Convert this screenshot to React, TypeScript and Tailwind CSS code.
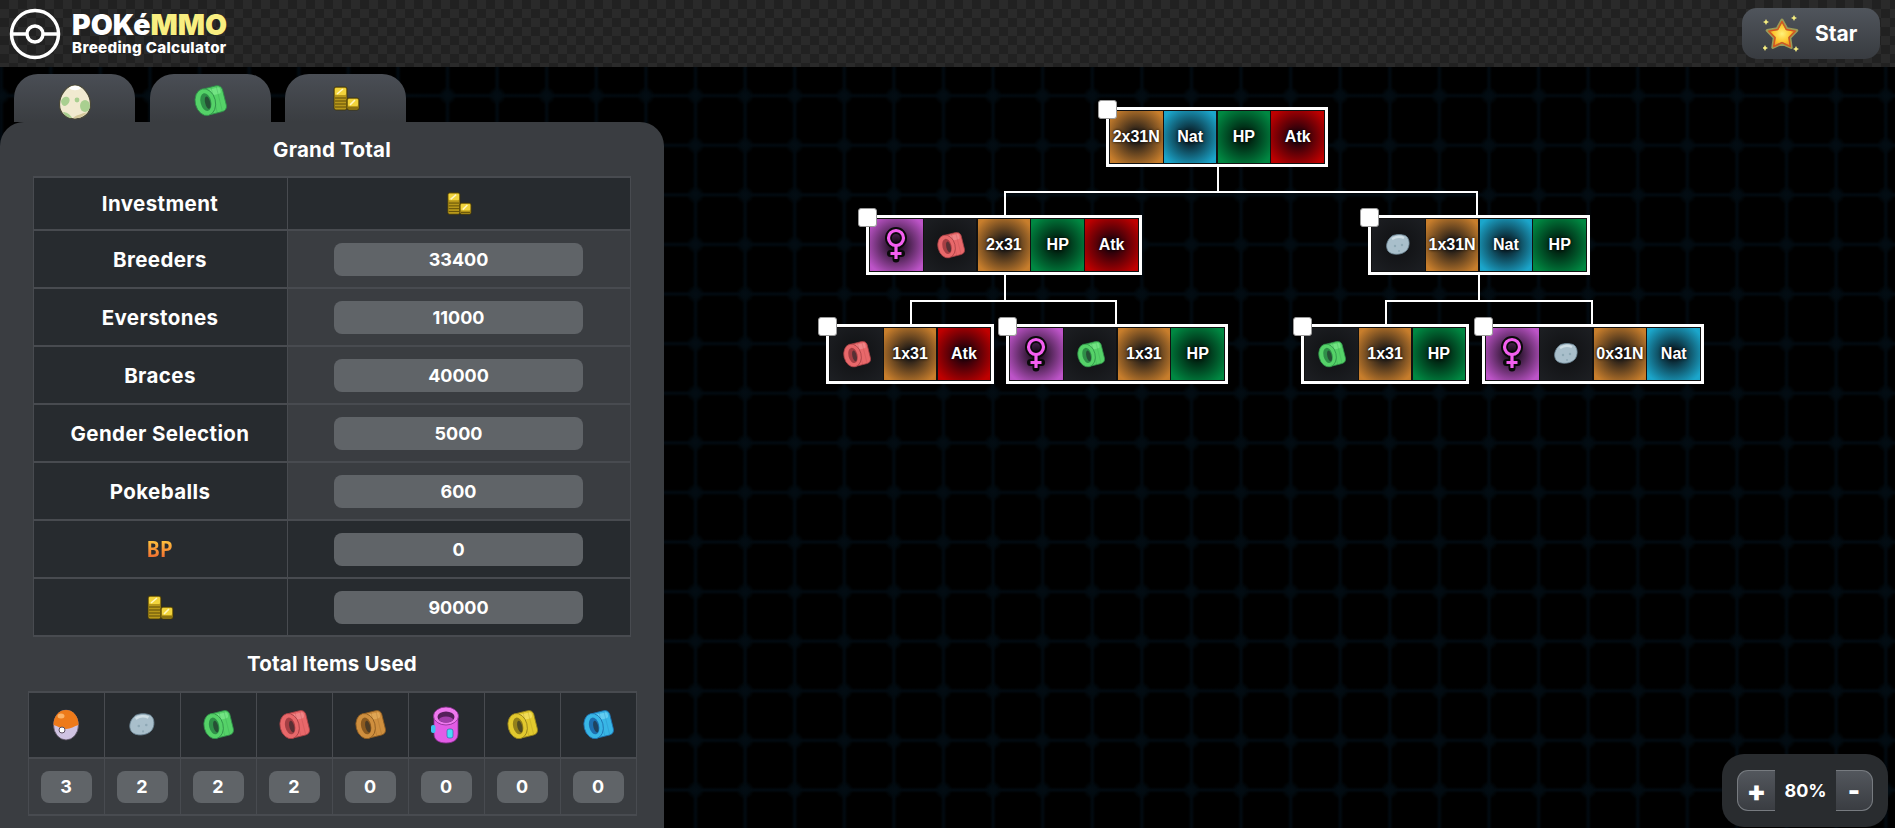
import type { ReactNode } from 'react'

type CellKind = 'iv' | 'nat' | 'hp' | 'atk' | 'female' | 'redBrace' | 'greenBrace' | 'stone'
type Cell = { kind: CellKind; label?: string }
type TreeNode = { x: number; y: number; cells: Cell[] }

// canvas coords, canvas starts at 664,67
const NODES: TreeNode[] = [
  { x: 442, y: 40, cells: [{ kind: 'iv', label: '2x31N' }, { kind: 'nat', label: 'Nat' }, { kind: 'hp', label: 'HP' }, { kind: 'atk', label: 'Atk' }] },
  { x: 202, y: 148, cells: [{ kind: 'female' }, { kind: 'redBrace' }, { kind: 'iv', label: '2x31' }, { kind: 'hp', label: 'HP' }, { kind: 'atk', label: 'Atk' }] },
  { x: 704, y: 148, cells: [{ kind: 'stone' }, { kind: 'iv', label: '1x31N' }, { kind: 'nat', label: 'Nat' }, { kind: 'hp', label: 'HP' }] },
  { x: 162, y: 257, cells: [{ kind: 'redBrace' }, { kind: 'iv', label: '1x31' }, { kind: 'atk', label: 'Atk' }] },
  { x: 342, y: 257, cells: [{ kind: 'female' }, { kind: 'greenBrace' }, { kind: 'iv', label: '1x31' }, { kind: 'hp', label: 'HP' }] },
  { x: 637, y: 257, cells: [{ kind: 'greenBrace' }, { kind: 'iv', label: '1x31' }, { kind: 'hp', label: 'HP' }] },
  { x: 818, y: 257, cells: [{ kind: 'female' }, { kind: 'stone' }, { kind: 'iv', label: '0x31N' }, { kind: 'nat', label: 'Nat' }] },
]

const LINES = [
  { x: 553, y: 100, w: 2, h: 25 },
  { x: 340, y: 124, w: 474, h: 2 },
  { x: 340, y: 124, w: 2, h: 25 },
  { x: 812, y: 124, w: 2, h: 25 },
  { x: 340, y: 207, w: 2, h: 26 },
  { x: 246, y: 233, w: 207, h: 2 },
  { x: 246, y: 233, w: 2, h: 24 },
  { x: 451, y: 233, w: 2, h: 24 },
  { x: 814, y: 207, w: 2, h: 26 },
  { x: 721, y: 233, w: 207, h: 2 },
  { x: 721, y: 233, w: 2, h: 24 },
  { x: 927, y: 233, w: 2, h: 24 },
]

const CELL_BG: Record<CellKind, string> = {
  iv: 'bg-[radial-gradient(circle,#121316_8%,#c87e2c_88%)]',
  nat: 'bg-[radial-gradient(circle,#08141c_8%,#1ba6cb_88%)]',
  hp: 'bg-[radial-gradient(circle,#00140a_8%,#008842_88%)]',
  atk: 'bg-[radial-gradient(circle,#14000c_8%,#bf0000_88%)]',
  female: 'bg-[radial-gradient(circle,#180c1a_8%,#bd54c8_88%)]',
  redBrace: 'bg-[radial-gradient(circle,#0f1012_0%,#1d1f23_100%)]',
  greenBrace: 'bg-[radial-gradient(circle,#0f1012_0%,#1d1f23_100%)]',
  stone: 'bg-[radial-gradient(circle,#0f1012_0%,#1d1f23_100%)]',
}

function Brace({ fill, light, dark, size = 32 }: { fill: string; light: string; dark: string; size?: number }) {
  return (
    <svg width={size} height={size} viewBox="0 0 32 32">
      <g transform="rotate(-14 16 16)">
        <rect x="9" y="3.500" width="21" height="25" rx="5" fill={fill} stroke={dark} strokeWidth="0.8" />
        <rect x="15" y="5.500" width="13" height="6" rx="2" fill={light} />
        <path d="M20 4v24M25 4v24" stroke={dark} strokeWidth="0.5" opacity="0.45" />
        <ellipse cx="11.500" cy="16" rx="9.500" ry="12.800" fill={fill} stroke={dark} strokeWidth="0.8" />
        <ellipse cx="12" cy="16" rx="5" ry="8.500" fill={dark} />
        <ellipse cx="13.500" cy="17" rx="2.400" ry="6" fill="#22262a" opacity="0.6" />
      </g>
    </svg>
  )
}

const GreenBrace = (p: { size?: number }) => <Brace fill="#55d268" light="#72e483" dark="#2f8f48" {...p} />
const RedBrace = (p: { size?: number }) => <Brace fill="#e8686a" light="#f08486" dark="#a53f44" {...p} />
const OrangeBrace = () => <Brace fill="#cf8f3e" light="#e0a655" dark="#8a5a20" />
const YellowBrace = () => <Brace fill="#e2c92e" light="#f0dc58" dark="#93801a" />
const BlueBrace = () => <Brace fill="#38b6e6" light="#62cdf2" dark="#1d6eae" />

function Stone({ size = 28 }: { size?: number }) {
  return (
    <svg width={size} height={size} viewBox="0 0 28 28">
      <path d="M4 20C1 15 3 9 8 5c4-2 10-2 14 0 4 3 4 10 1 14-4 5-15 6-19 1z" fill="#a9bfcb" stroke="#6d8796" strokeWidth="0.8" />
      <path d="M8 8c3-2 8-3 12-1" stroke="#cfdee5" strokeWidth="2.500" fill="none" />
      <circle cx="11" cy="15" r="1.200" fill="#8ea8b5" />
      <circle cx="18" cy="14" r="1.200" fill="#8ea8b5" />
      <circle cx="15" cy="20" r="1" fill="#8ea8b5" />
    </svg>
  )
}

function Female() {
  return (
    <svg width="26" height="36" viewBox="0 0 26 36">
      <g fill="none" stroke="#0a0a0a" strokeWidth="7" strokeLinecap="round">
        <circle cx="13" cy="11" r="7.500" />
        <path d="M13 19v13M7.500 26.500h11" />
      </g>
      <g fill="none" stroke="#f45ff0" strokeWidth="3.200">
        <circle cx="13" cy="11" r="7.500" />
        <path d="M13 19v13M7.500 26.500h11" />
      </g>
    </svg>
  )
}

function Egg() {
  return (
    <svg width="34" height="36" viewBox="0 0 34 36">
      <path d="M17 1C9 1 1.500 11 1.500 20.500 1.500 30 9 35 17 35s15.500-5 15.500-14.500C32.500 11 25 1 17 1z" fill="#f1ead0" stroke="#4a4838" strokeWidth="1.200" />
      <path d="M11 4c3-3 9-3 12 0-3 3-9 3-12 0z" fill="#ffffff" />
      <path d="M3 17c2-5 6-5 8-3 2 3-1 7-4 8-2 0-4-2-4-5z" fill="#a9cf90" />
      <ellipse cx="27" cy="22" rx="5" ry="6" fill="#a9cf90" />
      <circle cx="19" cy="16" r="2.400" fill="#a9cf90" />
      <path d="M5 28c3 0 7 2 9 6-4 0-7-2-9-6z" fill="#a9cf90" />
      <path d="M15 34c3-3 9-4 14-6-3 4-8 7-14 6z" fill="#d4c89a" />
    </svg>
  )
}

function Coins({ size = 30 }: { size?: number }) {
  return (
    <svg width={size} height={size} viewBox="0 0 30 30">
      <g stroke="#3c3208" strokeWidth="0.8">
        <rect x="3" y="3" width="13" height="23" rx="2" fill="#b8981a" />
        <rect x="16" y="14" width="12" height="12" rx="2" fill="#b8981a" />
      </g>
      <rect x="4" y="4" width="11" height="7" rx="1" fill="#f2d43c" />
      <rect x="17" y="15" width="10" height="7" rx="1" fill="#f2d43c" />
      <path d="M6 10l6-5M19 21l5-5" stroke="#fff6c0" strokeWidth="1.600" />
      <path d="M4 14h11M4 17h11M4 20h11M4 23h11M17 24h10" stroke="#5e4c08" strokeWidth="1" />
    </svg>
  )
}

function Pokeball() {
  return (
    <svg width="28" height="34" viewBox="0 0 28 34">
      <ellipse cx="14" cy="17" rx="12.500" ry="15" fill="#cfc3e2" stroke="#5b5060" strokeWidth="0.8" />
      <path d="M1.500 17C1.500 8 7 2 14 2s12.500 6 12.500 15c-4 1-8 4-12.500 4S5.500 18 1.500 17z" fill="#ee7a1a" />
      <ellipse cx="9" cy="8" rx="3.500" ry="2.500" fill="#fbb36a" />
      <circle cx="10" cy="22" r="3" fill="#ffffff" stroke="#5b5060" strokeWidth="1" />
    </svg>
  )
}

function Ring() {
  return (
    <svg width="32" height="40" viewBox="0 0 32 40">
      <path d="M4 12h24v17c0 6-5 9-12 9S4 35 4 29z" fill="#e25ce6" stroke="#8a2c92" strokeWidth="0.8" />
      <ellipse cx="16" cy="11" rx="12.500" ry="9" fill="#ee78ee" stroke="#8a2c92" strokeWidth="0.8" />
      <ellipse cx="16" cy="12" rx="8.500" ry="5.500" fill="#55205a" />
      <ellipse cx="16" cy="14.500" rx="7" ry="3" fill="#a23eaa" />
      <rect x="1" y="20" width="4.500" height="8" rx="2" fill="#3cc4ee" />
      <rect x="17" y="24" width="6" height="9" rx="2" fill="#4cd8f8" stroke="#1a6a9a" strokeWidth="0.6" />
    </svg>
  )
}

function StarIcon() {
  return (
    <svg width="38" height="38" viewBox="0 0 38 38">
      <defs>
        <radialGradient id="star-fill">
          <stop offset="0%" stopColor="#fff27a" />
          <stop offset="60%" stopColor="#fdc52c" />
          <stop offset="100%" stopColor="#ee8a1e" />
        </radialGradient>
      </defs>
      <path d="M19 5l4.800 8.700 10 1.800-7 7.200 1.400 9.800-9.200-4.200-9.200 4.200 1.400-9.800-7-7.200 10-1.800z" fill="url(#star-fill)" stroke="#9a9a58" strokeWidth="3" strokeLinejoin="round" />
      <path d="M19 6.500l4.300 8 9 1.600-6.300 6.500 1.300 9-8.300-3.900-8.300 3.900 1.300-9-6.300-6.500 9-1.600z" fill="none" stroke="#d8541c" strokeWidth="1.400" strokeLinejoin="round" />
      <g fill="#f6ee80">
        <path d="M3 4l1 2 2 1-2 1-1 2-1-2-2-1 2-1zM31 0l1 2 2 1-2 1-1 2-1-2-2-1 2-1zM2 30l1 2 2 1-2 1-1 2-1-2-2-1 2-1zM33 31l1 2 2 1-2 1-1 2-1-2-2-1 2-1z" />
      </g>
    </svg>
  )
}

function Logo() {
  return (
    <svg width="52" height="52" viewBox="0 0 52 52">
      <g fill="none" stroke="#ffffff" strokeWidth="3.500">
        <circle cx="26" cy="26" r="23.500" />
        <circle cx="26" cy="26" r="8" />
        <path d="M2.500 26H18M34 26h15.500" />
      </g>
    </svg>
  )
}

function NodeCell({ cell }: { cell: Cell }) {
  return (
    <div className={`w-[52.5px] h-[52px] flex items-center justify-center ${CELL_BG[cell.kind]}`}>
      {cell.label && (
        <span className="font-[family-name:'Liberation_Sans',Arial,sans-serif] font-bold text-[16px] text-white [text-shadow:0_0_3px_#000]">
          {cell.label}
        </span>
      )}
      {cell.kind === 'female' && <Female />}
      {cell.kind === 'redBrace' && <RedBrace size={29} />}
      {cell.kind === 'greenBrace' && <GreenBrace size={29} />}
      {cell.kind === 'stone' && <Stone />}
    </div>
  )
}

function BreedNode({ node }: { node: TreeNode }) {
  return (
    <div className="absolute" style={{ left: node.x, top: node.y }}>
      <div className="flex gap-[1.33px] border-[3px] border-white bg-[#111] p-px">
        {node.cells.map((c, i) => (
          <NodeCell key={i} cell={c} />
        ))}
      </div>
      <div className="absolute -left-2 -top-[7px] w-[19px] h-[19px] rounded-[3px] bg-white border border-[#9a9a9a]" />
    </div>
  )
}

function Pill({ children }: { children: ReactNode }) {
  return (
    <div className="mx-auto w-[249px] h-[33px] rounded-lg bg-[#606468] flex items-center justify-center text-[18px] tracking-normal font-bold text-white">
      {children}
    </div>
  )
}

const COSTS: { label: ReactNode; value: string; dark?: boolean }[] = [
  { label: 'Breeders', value: '33400' },
  { label: 'Everstones', value: '11000' },
  { label: 'Braces', value: '40000' },
  { label: 'Gender Selection', value: '5000' },
  { label: 'Pokeballs', value: '600' },
  {
    label: (
      <span className="font-[family-name:'DejaVu_Sans_Mono',monospace] font-bold text-[21px] leading-[24px] bg-gradient-to-b from-[#ffd040] to-[#e8502c] bg-clip-text text-transparent">
        BP
      </span>
    ),
    value: '0',
    dark: true,
  },
  { label: <Coins size={30} />, value: '90000', dark: true },
]

const ITEMS: { icon: ReactNode; count: number }[] = [
  { icon: <Pokeball />, count: 3 },
  { icon: <Stone size={30} />, count: 2 },
  { icon: <GreenBrace />, count: 2 },
  { icon: <RedBrace />, count: 2 },
  { icon: <OrangeBrace />, count: 0 },
  { icon: <Ring />, count: 0 },
  { icon: <YellowBrace />, count: 0 },
  { icon: <BlueBrace />, count: 0 },
]

function Tab({ children }: { children: ReactNode }) {
  return (
    <div className="w-[121px] h-[48px] rounded-t-[24px] bg-gradient-to-b from-[#4a4e55] to-[#3a3d41] flex items-start justify-center pt-[10px]">
      {children}
    </div>
  )
}

export default function App() {
  return (
    <div className="w-[1895px] h-[828px] overflow-hidden flex flex-col bg-black text-white font-[family-name:Inter,sans-serif]">
      <header className="h-[67px] shrink-0 flex items-center justify-between pl-[9px] pr-[15px] bg-[#252525] bg-[conic-gradient(#2a2a2a_25%,#212121_0_50%,#2a2a2a_0_75%,#212121_0)] bg-[size:18px_18px]">
        <div className="flex items-center gap-[11px]">
          <Logo />
          <div className="flex flex-col">
            <div className="text-[28.5px] leading-[28px] font-black">
              POKé<span className="text-[#f8ee80]">MMO</span>
            </div>
            <div className="text-[15.2px] leading-[18px] font-extrabold tracking-[0.3px]">Breeding Calculator</div>
          </div>
        </div>
        <div className="w-[138px] h-[51px] rounded-[15px] bg-gradient-to-b from-[#50555c] to-[#383b40] flex items-center gap-[14px] pl-[21px]">
          <StarIcon />
          <span className="text-[21px] font-bold">Star</span>
        </div>
      </header>

      <main className="flex-1 min-h-0 relative flex bg-[radial-gradient(circle_at_center,#030d14_0,#020b11_4px,transparent_9px),linear-gradient(to_right,transparent_21.8px,#020b12_24.8px,transparent_27.8px),linear-gradient(to_bottom,transparent_21.8px,#020b12_24.8px,transparent_27.8px)] bg-[size:49.6px_49.6px] bg-[position:26px_3.9px]">
        <aside className="w-[664px] shrink-0 flex flex-col pt-[7px]">
          <div className="flex gap-[14.5px] pl-[14px]">
            <Tab><Egg /></Tab>
            <Tab><GreenBrace size={34} /></Tab>
            <Tab><Coins size={30} /></Tab>
          </div>
          <div className="flex-1 bg-[#3a3d41] rounded-t-[24px] flex flex-col items-center">
            <h2 className="mt-[17px] h-[22px] leading-[22px] text-[20.5px] tracking-[0.2px] font-bold">Grand Total</h2>
            <table className="mt-[15px] w-[598px] table-fixed border-collapse ml-[-1px] text-[20.5px] tracking-[0.4px] font-bold">
              <tbody>
                <tr className="h-[53px] bg-[#272b2f]">
                  <td className="w-[254px] pt-[2px] border-x border-y-2 border-[#484b50] text-center">Investment</td>
                  <td className="border-x border-y-2 border-[#484b50]">
                    <div className="flex justify-center"><Coins size={28} /></div>
                  </td>
                </tr>
                {COSTS.map((r, i) => (
                  <tr key={i} className="h-[58px]">
                    <td className="pt-[2px] border-x border-y-2 border-[#484b50] bg-[#272b2f] text-center">
                      <div className="flex justify-center">{r.label}</div>
                    </td>
                    <td className={`border-x border-y-2 border-[#484b50] ${r.dark ? 'bg-[#272b2f]' : ''}`}>
                      <Pill>{r.value}</Pill>
                    </td>
                  </tr>
                ))}
              </tbody>
            </table>
            <h3 className="mt-[16px] h-[22px] leading-[22px] text-[20.5px] tracking-[0.2px] font-bold">Total Items Used</h3>
            <table className="mt-[16px] w-[609px] table-fixed border-collapse">
              <tbody>
                <tr className="h-[66px] bg-[#272b2f]">
                  {ITEMS.map((it, i) => (
                    <td key={i} className="border-x border-y-2 border-[#484b50]">
                      <div className="flex justify-center">{it.icon}</div>
                    </td>
                  ))}
                </tr>
                <tr className="h-[57px]">
                  {ITEMS.map((it, i) => (
                    <td key={i} className="border-x border-y-2 border-[#484b50]">
                      <div className="mx-auto w-[51px] h-[32px] rounded-lg bg-[#606468] flex items-center justify-center text-[18px] font-bold">
                        {it.count}
                      </div>
                    </td>
                  ))}
                </tr>
              </tbody>
            </table>
          </div>
        </aside>

        <section className="flex-1 relative">
          {LINES.map((l, i) => (
            <div key={i} className="absolute bg-white" style={{ left: l.x, top: l.y, width: l.w, height: l.h }} />
          ))}
          {NODES.map((n, i) => (
            <BreedNode key={i} node={n} />
          ))}
        </section>

        <div className="absolute right-[7px] bottom-px w-[166px] h-[73px] rounded-[22px] bg-[#2b2e31]/95 flex items-center justify-between px-[15px]">
          <button className="w-[38px] h-[41px] rounded-l-[11px] border border-r-0 border-[#777b80] bg-gradient-to-b from-[#53575d] to-[#3a3d42] text-[28px] leading-none font-black flex items-center justify-center">
            +
          </button>
          <span className="text-[18px] font-bold">80%</span>
          <button className="w-[37px] h-[41px] rounded-r-[11px] border border-l-0 border-[#777b80] bg-gradient-to-b from-[#53575d] to-[#3a3d42] text-[26px] leading-none font-black flex items-center justify-center">
            -
          </button>
        </div>
      </main>
    </div>
  )
}
